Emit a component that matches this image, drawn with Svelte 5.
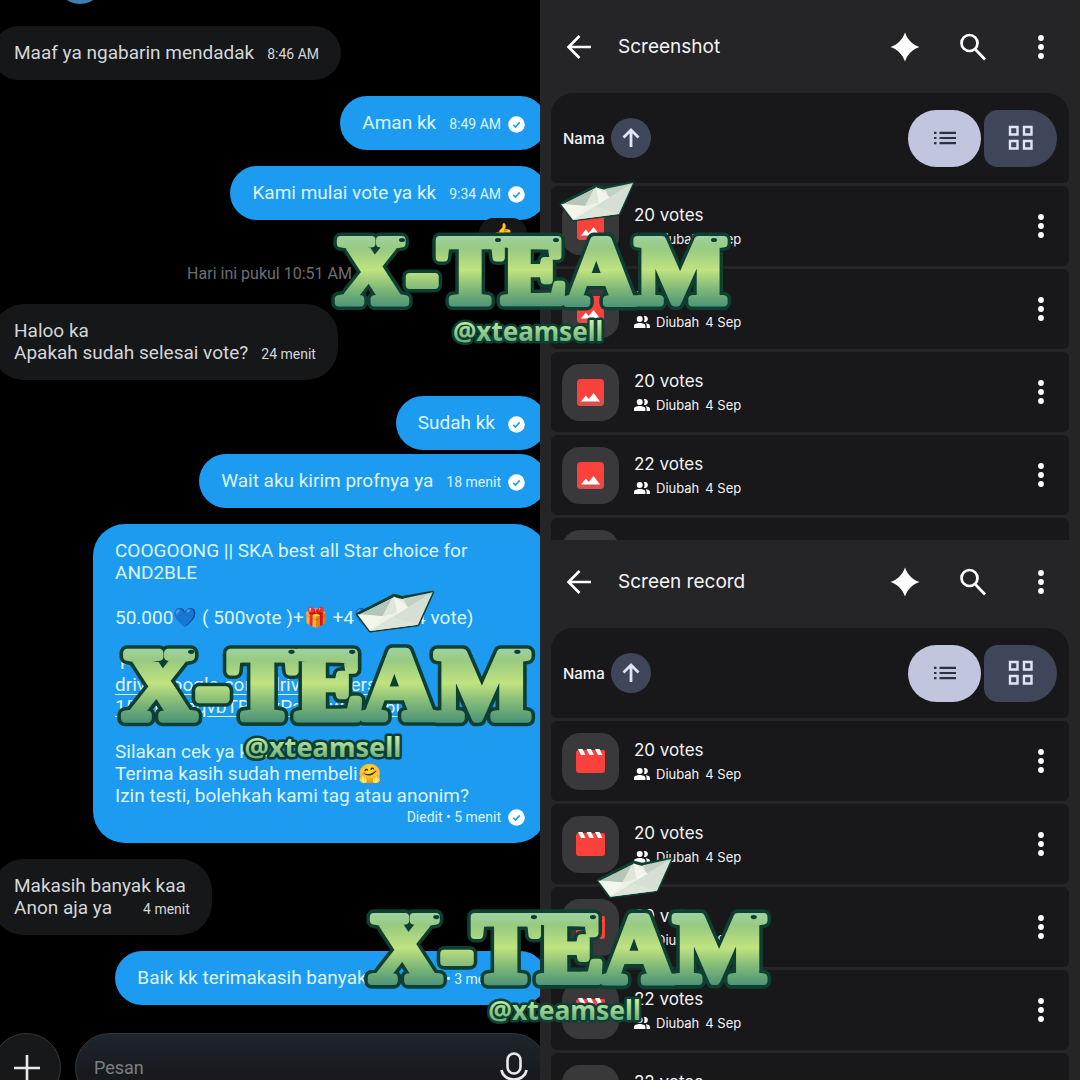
<script>
	const messages = [
		{ lines: ["Maaf ya ngabarin mendadak"], time: "8:46 AM" },
		{ mine: true, lines: ["Aman kk"], time: "8:49 AM", status: "read" },
		{ mine: true, lines: ["Kami mulai vote ya kk"], time: "9:34 AM", status: "read", reaction: "👍" },
		{ divider: "Hari ini pukul 10:51 AM" },
		{ lines: ["Haloo ka", "Apakah sudah selesai vote?"], time: "24 menit" },
		{ mine: true, lines: ["Sudah kk"], status: "read" },
		{ mine: true, lines: ["Wait aku kirim profnya ya"], time: "18 menit", status: "read", grouped: true },
		{ order: true, mine: true, time: "Diedit • 5 menit", status: "read" },
		{ lines: ["Makasih banyak kaa", "Anon aja ya"], time: "4 menit", loose: true },
		{ mine: true, lines: ["Baik kk terimakasih banyak"], time: "Diedit • 3 menit", status: "sent", far: true },
	]

	const folders = [
		{ title: "Screenshot", kind: "image", files: ["20 votes", "20 votes", "20 votes", "22 votes", "22 votes"] },
		{ title: "Screen record", kind: "video", files: ["20 votes", "20 votes", "20 votes", "22 votes", "22 votes"] },
	]

	const stamps = ["top", "middle", "bottom"]
	// small punched holes in the upper right of each letter
	const holes = [70, 166, 224, 382]
</script>

{#snippet check(status)}
	<svg class="check" viewBox="0 0 17 17" aria-label={status}>
		{#if status === "read"}
			<circle cx="8.5" cy="8.5" r="8.3" fill="#fff" />
			<path d="M5.3 8.9l2.2 2.1 4.2-4.6" fill="none" stroke="#1d9bf0" stroke-width="1.6" />
		{:else}
			<circle cx="8.5" cy="8.5" r="7.5" fill="none" stroke="#d9effd" stroke-width="1.4" />
			<path d="M5.3 8.9l2.2 2.1 4.2-4.6" fill="none" stroke="#d9effd" stroke-width="1.4" />
		{/if}
	</svg>
{/snippet}

{#snippet dots()}
	<svg width="8" height="26" viewBox="0 0 8 26" fill="#fff">
		<circle cx="4" cy="4" r="2.9" />
		<circle cx="4" cy="13" r="2.9" />
		<circle cx="4" cy="22" r="2.9" />
	</svg>
{/snippet}

<main>
	<section class="chat">
		<div class="thread">
			<div class="avatar"></div>
			{#each messages as message}
				{#if message.divider}
					<p class="divider">{message.divider}</p>
				{:else if message.order}
					<article class="bubble mine order">
						<p>COOGOONG || SKA best all Star choice for<br />AND2BLE</p>
						<p>50.000💙 ( 500vote )+🎁 +4💙 ( 504 vote)</p>
						<p>
							&nbsp;Prof :<br />
							<a href="#drive">drive.google.com/drive/folders/<br />15Kdk0mqvbTR3gxPaLmwYeJs6u0Q</a>
						</p>
						<p>Silakan cek ya kak<br />Terima kasih sudah membeli🤗<br />Izin testi, bolehkah kami tag atau anonim?</p>
						<div class="meta">{message.time} {@render check(message.status)}</div>
					</article>
				{:else}
					<article
						class="bubble"
						class:mine={message.mine}
						class:grouped={message.grouped}
						class:loose={message.loose}
						class:far={message.far}
					>
						{#each message.lines.slice(0, -1) as line}
							<div>{line}</div>
						{/each}
						<div class="last">
							<span>{message.lines.at(-1)}</span>
							<div class="meta">
								{#if message.time}<time>{message.time}</time>{/if}
								{#if message.status}{@render check(message.status)}{/if}
							</div>
						</div>
						{#if message.reaction}
							<div class="reaction">{message.reaction}</div>
						{/if}
					</article>
				{/if}
			{/each}
			<form class="composer">
				<button type="button" class="add" aria-label="Tambah">
					<svg width="26" height="26" viewBox="0 0 26 26" fill="none" stroke="#e7e9ea" stroke-width="2.6">
						<path d="M13 0v26M0 13h26" />
					</svg>
				</button>
				<div class="field">
					<input type="text" placeholder="Pesan" aria-label="Pesan" />
					<button type="button" class="mic" aria-label="Rekam suara">
						<svg width="28" height="32" viewBox="0 0 28 32" fill="none" stroke="#e7e9ea" stroke-width="2.6">
							<rect x="7.5" y="1.5" width="13" height="20" rx="6.5" />
							<path d="M1.5 18a12.6 11 0 0 0 25 0M14 27v5" />
						</svg>
					</button>
				</div>
			</form>
		</div>
	</section>

	<div class="drive">
		{#each folders as folder}
			<section class="folder">
				<header>
					<button class="back" aria-label="Kembali">
						<svg width="26" height="26" viewBox="0 0 26 26" fill="none" stroke="#fff" stroke-width="2.6">
							<path d="M25 13H3M13.5 2L2.5 13l11 11" />
						</svg>
					</button>
					<h1>{folder.title}</h1>
					<button aria-label="Gemini">
						<svg width="30" height="30" viewBox="0 0 30 30" fill="#fff">
							<path d="M15 0.5C17.4 7.6 22.4 12.6 29.5 15C22.4 17.4 17.4 22.4 15 29.5C12.6 22.4 7.6 17.4 0.5 15C7.6 12.6 12.6 7.6 15 0.5Z" />
						</svg>
					</button>
					<button aria-label="Telusuri">
						<svg width="26" height="28" viewBox="0 0 26 28" fill="none" stroke="#fff" stroke-width="2.7">
							<circle cx="9.5" cy="10" r="8" />
							<path d="M15 16l10 10.5" />
						</svg>
					</button>
					<button aria-label="Opsi lainnya">{@render dots()}</button>
				</header>

				<div class="sort">
					<span>Nama</span>
					<button class="direction" aria-label="Urutan naik">
						<svg width="20" height="20" viewBox="0 0 20 20" fill="none" stroke="#dfe3fb" stroke-width="2.8">
							<path d="M10 19V2M2.5 9.5L10 2l7.5 7.5" />
						</svg>
					</button>
					<button class="view list" aria-label="Tampilan daftar">
						<svg width="22" height="14" viewBox="0 0 22 14" fill="#2b3042">
							<path d="M0 .8h2.5v2.2H0zM5.5 .8H22v2.2H5.5zM0 5.9h2.5v2.2H0zM5.5 5.9H22v2.2H5.5zM0 11h2.5v2.2H0zM5.5 11H22v2.2H5.5z" />
						</svg>
					</button>
					<button class="view grid" aria-label="Tampilan kotak">
						<svg width="26" height="26" viewBox="0 0 26 26" fill="none" stroke="#dfe3fb" stroke-width="2.4">
							<path d="M2 2h7.5v7.5H2zM16 2h7.5v7.5H16zM2 16h7.5v7.5H2zM16 16h7.5v7.5H16z" />
						</svg>
					</button>
				</div>

				<ul>
					{#each folder.files as file}
						<li>
							<div class="thumb">
								{#if folder.kind === "image"}
									<svg width="27" height="27" viewBox="0 0 27 27">
										<rect width="27" height="27" rx="4" fill="#fb413b" />
										<path d="M0 22h27v1a4 4 0 0 1-4 4H4a4 4 0 0 1-4-4z" fill="#d9504e" />
										<path d="M4 22.5l4.8-6 3 3.5 4.8-6 6.4 8.5z" fill="#fff" />
									</svg>
								{:else}
									<svg width="29" height="25" viewBox="0 0 29 25">
										<path d="M3 1h24.5a1.5 1.5 0 0 1 1.5 1.5V21a3 3 0 0 1-3 3H3a3 3 0 0 1-3-3V4a3 3 0 0 1 3-3z" fill="#fb413b" />
										<path d="M2 0h4.5l3 6H5zM10.5 0h4.5l3 6h-4.5zM19 0h4.5l3 6H22z" fill="#fff" />
									</svg>
								{/if}
							</div>
							<div class="info">
								<h2>{file}</h2>
								<p>
									<svg width="16" height="12" viewBox="0 0 16 12" fill="#fff">
										<circle cx="5.7" cy="3" r="3" />
										<path d="M0 12v-2.2C0 7.9 3 7 5.7 7s5.7.9 5.7 2.8V12zM9.8.2a3 3 0 1 1 0 5.6c1-1.6 1-4 0-5.6zM12.6 12V9.6c0-.9-.4-1.7-1.1-2.3 2.3.3 4.5 1.1 4.5 2.6V12z" />
									</svg>
									<span>Diubah</span>
									<span>4 Sep</span>
								</p>
							</div>
							<button aria-label="Opsi file">{@render dots()}</button>
						</li>
					{/each}
				</ul>
			</section>
		{/each}
	</div>

	{#each stamps as stamp}
		<svg class="stamp {stamp}" viewBox="0 0 396 174">
			<defs>
				<linearGradient id="leaf-{stamp}" gradientUnits="userSpaceOnUse" x1="0" y1="54" x2="0" y2="130">
					<stop offset="0" stop-color="#a3d4ac" />
					<stop offset="0.22" stop-color="#98ca80" />
					<stop offset="0.5" stop-color="#c1e380" />
					<stop offset="0.75" stop-color="#7fb877" />
					<stop offset="1" stop-color="#4a9177" />
				</linearGradient>
				<linearGradient id="handle-{stamp}" gradientUnits="userSpaceOnUse" x1="0" y1="144" x2="0" y2="166">
					<stop offset="0" stop-color="#c3eba0" />
					<stop offset="1" stop-color="#62a877" />
				</linearGradient>
			</defs>
			<g class="boat">
				<path d="M229 26L264 8l8 2 29-5-14 31-46 6z" fill="#e6ebdf" stroke="#0d4033" stroke-width="3" />
				<path d="M231 26L262 11l-9 17z" fill="#b4c6b8" />
				<path d="M273 11l28-6-23 17z" fill="#c3d0c5" />
				<path d="M264 9l-11 19 14-4z" fill="#dfe6d8" />
				<path d="M264 9l3 17 13-5z" fill="#f3f5ea" />
				<path d="M229 26l25 2 5 7-18 7z" fill="#f4f6ec" />
				<path d="M254 28l25-6 22-17-60 37z" fill="#eef1e6" />
				<path d="M241 42l60-37-14 31z" fill="#d5dfd3" />
				<path d="M241 42l22-13 24 7z" fill="#dde5d9" />
			</g>
			<text class="word edge" x="5" y="125">X-TEAM</text>
			<text class="word body" x="5" y="125" fill="url(#leaf-{stamp})" stroke="url(#leaf-{stamp})">X-TEAM</text>
			{#each holes as x}
				<ellipse cx={x} cy="62" rx="3" ry="2" fill="#0d4033" />
			{/each}
			<text class="handle edge" x="121" y="163">@xteamsell</text>
			<text class="handle" x="121" y="163" fill="url(#handle-{stamp})">@xteamsell</text>
		</svg>
	{/each}
</main>

<style>
	:global(body) {
		margin: 0;
		background: #000;
	}

	main {
		position: relative;
		display: grid;
		grid-template-columns: 1fr 1fr;
		height: 100vh;
		overflow: hidden;
		font-family: Roboto, "Liberation Sans", sans-serif;
	}

	button {
		display: flex;
		align-items: center;
		justify-content: center;
		padding: 0;
		border: 0;
		background: none;
		cursor: pointer;
	}

	h1, h2, p, ul {
		margin: 0;
		padding: 0;
		font-weight: 400;
	}

	.chat {
		overflow: hidden;
		background: #000;
	}

	.thread {
		display: flex;
		flex-direction: column;
		align-items: flex-start;
		gap: 16px;
		margin: 0 -7px 0 -8px;
	}

	.avatar {
		width: 46px;
		height: 46px;
		margin: -42px 0 6px 65px;
		border-radius: 50%;
		background: #3c7fb5;
	}

	.bubble {
		position: relative;
		padding: 16px 22px;
		border-radius: 27px;
		background: #161719;
		color: #d4d6d8;
		font-size: 19px;
		line-height: 22px;
		white-space: nowrap;
	}

	.bubble.mine {
		align-self: flex-end;
		background: #1d9bf0;
		color: #dcf5ff;
	}

	.bubble:not(.mine) {
		border-radius: 32px;
	}

	.grouped {
		margin-top: -12px;
	}

	.last {
		display: flex;
		justify-content: space-between;
		gap: 13px;
	}

	.loose .last {
		gap: 31px;
	}

	.far .last {
		gap: 40px;
	}

	.meta {
		display: flex;
		align-items: center;
		gap: 7px;
		padding-top: 2px;
		font-size: 14px;
		line-height: 20px;
	}

	.check {
		width: 17px;
		height: 17px;
	}

	.reaction {
		position: absolute;
		right: 20px;
		bottom: -28px;
		width: 48px;
		height: 30px;
		border-radius: 15px;
		background: #161719;
		font-size: 16px;
		line-height: 28px;
		text-align: center;
	}

	.divider {
		align-self: center;
		margin: 28px 0 5px;
		color: #6b6f73;
		font-size: 16px;
		line-height: 19px;
	}

	.order {
		box-sizing: border-box;
		width: 454px;
		border-radius: 32px;
	}

	.order p + p {
		margin-top: 23px;
	}

	.order a {
		color: inherit;
		text-underline-offset: 3px;
	}

	.order .meta {
		justify-content: flex-end;
		padding: 0;
	}

	.composer {
		display: flex;
		align-self: stretch;
		gap: 14px;
		margin-top: 12px;
	}

	.add, .field {
		box-sizing: border-box;
		height: 69px;
		border: 1px solid #33383c;
		border-radius: 35px;
		background: #17181a;
	}

	.add {
		width: 69px;
	}

	.field {
		flex: 1;
		display: flex;
		align-items: center;
		padding: 0 18px;
		background: linear-gradient(#1c262d, #181a1d 60%);
	}

	input {
		flex: 1;
		min-width: 0;
		padding: 0;
		border: 0;
		outline: none;
		background: none;
		color: #e7e9ea;
		font: inherit;
		font-size: 18px;
	}

	input::placeholder {
		color: #7a7f83;
		opacity: 1;
	}

	.drive {
		display: grid;
		grid-template-rows: 1fr 1fr;
		min-height: 0;
		background: #252527;
		color: #f4f4f6;
		font-family: Inter, "Noto Sans", sans-serif;
	}

	.folder {
		min-height: 0;
		padding: 15px 11px 0;
		overflow: hidden;
	}

	.folder + .folder {
		padding-top: 10px;
	}

	header {
		display: flex;
		height: 64px;
		margin: 0 -6px 14px 4px;
	}

	header button {
		width: 68px;
	}

	header .back {
		width: 48px;
	}

	h1 {
		flex: 1;
		padding-left: 15px;
		font-size: 19px;
		line-height: 64px;
	}

	.sort {
		display: flex;
		align-items: center;
		height: 90px;
		margin-bottom: 3px;
		padding: 0 12px;
		box-sizing: border-box;
		border-radius: 22px 22px 6px 6px;
		background: #18181a;
		font-size: 15px;
		font-weight: 500;
	}

	.direction {
		width: 40px;
		height: 40px;
		margin: 0 auto 0 6px;
		border-radius: 50%;
		background: #40465a;
	}

	.view {
		width: 73px;
		height: 57px;
	}

	.list {
		border-radius: 29px;
		background: #c1c6de;
	}

	.grid {
		margin-left: 3px;
		border-radius: 14px 29px 29px 14px;
		background: #40465a;
	}

	ul {
		display: grid;
		gap: 3px;
		list-style: none;
	}

	li {
		display: flex;
		align-items: center;
		height: 80px;
		padding-left: 11px;
		border-radius: 6px;
		background: #18181a;
	}

	.thumb {
		display: grid;
		place-items: center;
		width: 57px;
		height: 57px;
		border-radius: 18px;
		background: #39393b;
	}

	.info {
		flex: 1;
		padding: 2px 0 0 15px;
		line-height: 24px;
	}

	h2 {
		font-size: 17px;
	}

	.info p {
		display: flex;
		align-items: center;
		gap: 6px;
		font-size: 13px;
	}

	li button {
		width: 56px;
		height: 56px;
	}

	.stamp {
		position: absolute;
		overflow: visible;
		pointer-events: none;
	}

	.top {
		left: 332px;
		top: 178px;
		width: 396px;
	}

	.middle {
		left: 118px;
		top: 587px;
		width: 414px;
	}

	.bottom {
		left: 365px;
		top: 854px;
		width: 403px;
	}

	.stamp text, .boat {
		stroke-linejoin: round;
	}

	.word {
		font-family: "Liberation Serif", serif;
		font-size: 96px;
		font-weight: 700;
	}

	.body {
		stroke-width: 8px;
	}

	.edge {
		fill: #0d4033;
		stroke: #0d4033;
		stroke-width: 15px;
	}

	.handle {
		font-family: "Noto Sans", sans-serif;
		font-size: 26px;
		font-weight: 700;
	}

	.handle.edge {
		stroke-width: 5px;
	}
</style>
